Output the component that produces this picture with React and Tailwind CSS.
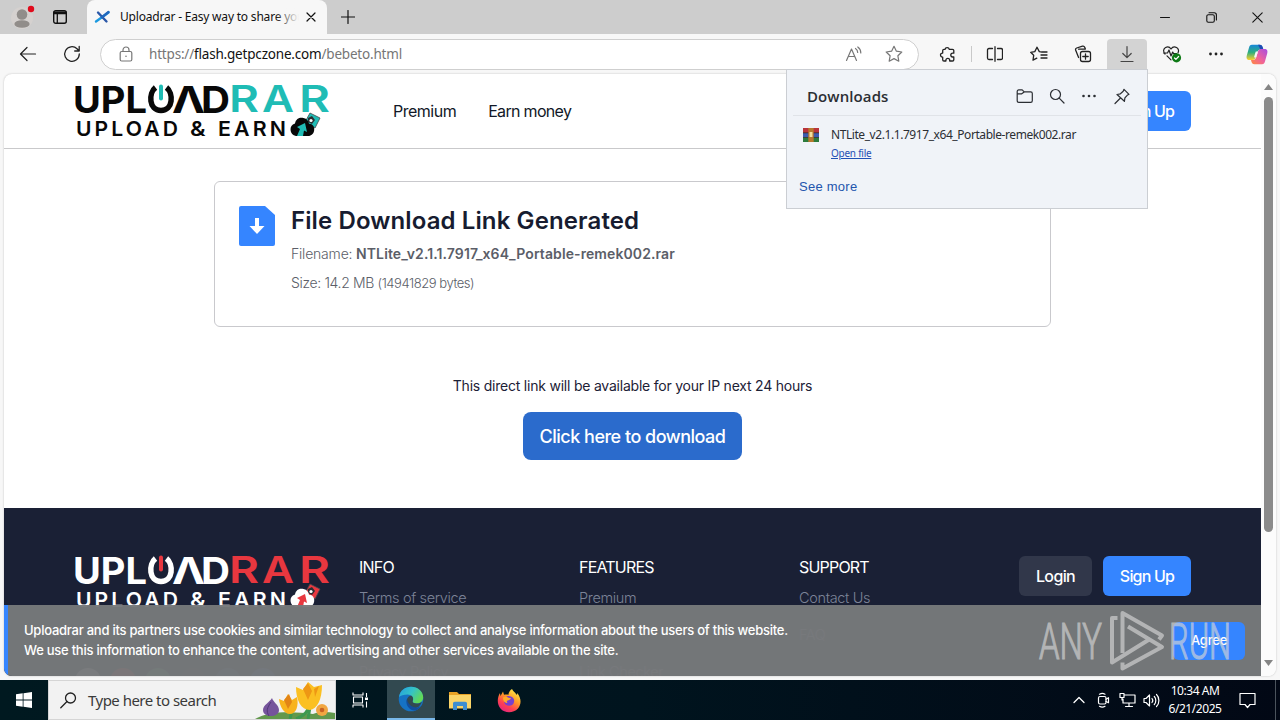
/**
 * Desktop view: browser window with the file download page and the taskbar
 */

import React from 'react';

function Icon({ w = 20, h = w, sw = 1.2, className = '', children }) {
  return (
    <svg
      width={w}
      height={h}
      viewBox={`0 0 ${w} ${h}`}
      fill="none"
      stroke="currentColor"
      strokeWidth={sw}
      strokeLinecap="round"
      strokeLinejoin="round"
      className={`shrink-0 ${className}`}
    >
      {children}
    </svg>
  );
}

function TabStrip() {
  return (
    <div className="flex h-[34px] items-stretch bg-[#cdcdcd] text-[#111]">
      <div className="flex w-[87px] items-center pl-[11px]">
        <Icon w={24} h={26}>
          <circle cx="11" cy="14" r="11" fill="#d5d1cf" stroke="none" />
          <circle cx="11" cy="10.500" r="5.300" fill="#918d8a" stroke="none" />
          <ellipse cx="11" cy="20" rx="7.600" ry="3.800" fill="#918d8a" stroke="none" />
          <circle cx="20" cy="5" r="3.200" fill="#e00b1c" stroke="none" />
        </Icon>
        <Icon w={16} h={16} sw={1.4} className="ml-[17px]">
          <rect x="1.700" y="1.700" width="12.600" height="12.600" rx="2" />
          <path d="M2 3.200h12M2 4.500h12M5.300 5v9" strokeWidth="1.300" />
        </Icon>
      </div>
      <div className="flex w-[240px] items-center rounded-t-lg bg-[#f7f7f7] pl-[7px]">
        <Icon w={17} h={16} sw={2.4}>
          <path d="M2 12.500 14.500 3.500" stroke="#1c9ae0" />
          <path d="M4 3.500 12.500 12.500" stroke="#2b58a8" />
          <path d="M8 8.300 14.500 3" stroke="#2168bd" />
        </Icon>
        <div className="relative ml-[9px] w-[179px] overflow-hidden font-['Noto_Sans','Open_Sans',sans-serif] text-[12px] leading-5 tracking-[-0.2px] whitespace-nowrap">
          Uploadrar - Easy way to share your
          <div className="absolute inset-y-0 right-0 w-6 bg-linear-to-r from-[#f7f7f7]/0 to-[#f7f7f7]" />
        </div>
        <Icon w={10} h={10} className="ml-[7px]">
          <path d="m1 1 8 8M9 1 1 9" />
        </Icon>
      </div>
      <div className="flex w-[42px] items-center justify-center">
        <Icon w={14} h={14}>
          <path d="M7 .5v13M.5 7h13" />
        </Icon>
      </div>
      <div className="ml-auto flex">
        <div className="flex w-[46px] items-center justify-center">
          <Icon w={10} h={10} sw={1}><path d="M.5 5.500h9" /></Icon>
        </div>
        <div className="flex w-[46px] items-center justify-center">
          <Icon w={11} h={11} sw={1.1}>
            <rect x=".8" y="2.800" width="7.500" height="7.500" rx="1.500" />
            <path d="M3 .8h5.200a2.200 2.200 0 0 1 2.200 2.200v5" />
          </Icon>
        </div>
        <div className="flex w-[46px] items-center justify-center">
          <Icon w={11} h={11} sw={1.1}><path d="m.8.8 9.400 9.400M10.200.8.8 10.200" /></Icon>
        </div>
      </div>
    </div>
  );
}

function ToolButton({ active, children }) {
  return (
    <div className="flex w-[44.4px] shrink-0 items-center justify-center">
      <div className={`flex h-[30px] w-10 items-center justify-center ${active ? 'rounded-t-sm bg-[#d3d3d3]' : ''}`}>
        {children}
      </div>
    </div>
  );
}

function CopilotLogo() {
  return (
    <svg width="22" height="21" viewBox="0 0 22 21">
      <defs>
        <linearGradient id="copA" x1="0" y1="0" x2="0" y2="1">
          <stop offset="0" stopColor="#1687d9" />
          <stop offset=".5" stopColor="#2fae7e" />
          <stop offset="1" stopColor="#ffd02b" />
        </linearGradient>
        <linearGradient id="copB" x1="1" y1="0" x2="0" y2="1">
          <stop offset="0" stopColor="#a64de2" />
          <stop offset=".55" stopColor="#f0639a" />
          <stop offset="1" stopColor="#ff8a3c" />
        </linearGradient>
      </defs>
      <path d="M6 .8h7.500c2 0 2.600 1 3.200 3l.5 1.600h-2.700c-1.800 0-2.600 1-3.100 2.700L9.800 13c-.6 2-1.500 3-3.500 3H3.500C.8 16 .1 14 .8 11.500L2.900 4C3.500 1.900 4.200.8 6 .8Z" fill="url(#copA)" />
      <path d="M12 .8h1.700c2 0 2.600 1 3.200 3l.5 1.600h-3z" fill="#1d4bb4" />
      <path d="M16 20.200H8.500c-2 0-2.600-1-3.200-3L5 15.900h2c1.800 0 2.600-1 3.100-2.700L11.800 8c.6-2 1.500-3 3.500-3h3.200c2.700 0 3.400 2 2.700 4.500L19.100 17c-.6 2.100-1.300 3.200-3.100 3.200Z" fill="url(#copB)" />
      <path d="m9.500 8.200-1.300 4.300c-.2.600.1 1 .7 1h1.300l1.800-5.900h-1.200c-.8 0-1.100.1-1.300.6Z" fill="#f7f7f7" />
    </svg>
  );
}

function Toolbar() {
  return (
    <div className="flex h-[40px] items-center bg-[#f7f7f7] text-[#222]">
      <Icon w={18} h={16} className="ml-[19px]">
        <path d="M1.500 8h15M8 1.500 1.500 8 8 14.500" />
      </Icon>
      <Icon w={18} h={18} sw={1.3} className="ml-[26px]">
        <path d="M16.300 9A7.300 7.300 0 1 1 14 3.700L16.200 6M16.200 1.500V6h-4.500" />
      </Icon>
      <div className="ml-[19px] flex h-[31px] w-[819px] items-center rounded-full border border-[#cfcfcf] bg-white text-[#777]">
        <Icon w={14} h={16} className="ml-[18px]">
          <rect x="1.200" y="5.500" width="11.600" height="9.500" rx="1.500" />
          <path d="M4 5.500V4a3 3 0 0 1 6 0v1.500" />
          <circle cx="7" cy="10.200" r=".8" fill="currentColor" stroke="none" />
        </Icon>
        <div className="ml-[16px] font-['Noto_Sans','Open_Sans',sans-serif] text-[13.500px] leading-5 tracking-[-0.19px] whitespace-nowrap text-[#767676]">
          https://<span className="text-[#111]">flash.getpczone.com</span>/bebeto.html
        </div>
        <Icon w={18} h={16} className="ml-auto">
          <path d="M1.500 14.500 6.500 3l5 11.500M3.200 10.500h6.600M10.500 2.500c1.500 1 2.200 2.500 2.200 4M12.800 1c2 1.400 3 3.500 3 6" />
        </Icon>
        <Icon w={18} h={18} className="mr-[15px] ml-[22px]">
          <path d="m9 1.300 2.400 4.900 5.400.8-3.900 3.800.9 5.400L9 13.600l-4.800 2.600.9-5.400L1.200 7l5.400-.8z" />
        </Icon>
      </div>
      <div className="flex w-[52px] justify-center pl-[5px]">
        <Icon w={17} h={17} sw={1.3}>
          <path d="M6 3.300a2.200 2.200 0 0 1 4.300 0h3.200c.8 0 1.300.5 1.300 1.300v2.600h-1.100a1.900 1.900 0 0 0 0 3.800h1.100v2.700c0 .8-.5 1.300-1.300 1.300h-2.800v-.8a1.900 1.900 0 0 0-3.800 0v.8H5c-.8 0-1.300-.5-1.300-1.300v-2.600h-.2a2 2 0 0 1 0-4h.2V4.600c0-.8.500-1.300 1.300-1.300z" />
        </Icon>
      </div>
      <div className="h-4 w-px bg-[#c9c9c9]" />
      <ToolButton>
        <Icon w={17} h={16} sw={1.3}>
          <path d="M6.500 2.500H3C2 2.500 1.500 3 1.500 4v8c0 1 .5 1.500 1.500 1.500h3.500M11.500 2.500H15c1 0 1.500.5 1.500 1.500v8c0 1-.5 1.500-1.500 1.500h-3.500M9 .7v14.600" />
        </Icon>
      </ToolButton>
      <ToolButton>
        <Icon w={18} h={17} sw={1.3}>
          <path d="M10.500 5.800 9.300 5.600 7 1.200 4.800 5.600l-4.100.7 3 3L3 14.200l3.800-2M11.500 6H17M11 9h6M11 12h6" />
        </Icon>
      </ToolButton>
      <ToolButton>
        <Icon w={18} h={18} sw={1.3}>
          <rect x="6.500" y="6.500" width="10" height="10" rx="2" />
          <path d="M11.500 8.800v5.400M8.800 11.500h5.400M4.600 12.500 1.700 5.200c-.4-1 .1-1.900 1-2.200l5.800-1.800c1-.3 1.800.1 2.200 1l.6 1.600M4.600 4.200h6.600" />
        </Icon>
      </ToolButton>
      <ToolButton active>
        <Icon w={14} h={18} className="text-[#444]">
          <path d="M7 1.500v11M2.800 8.500 7 12.700l4.200-4.200M1 16.500h12" />
        </Icon>
      </ToolButton>
      <ToolButton>
        <Icon w={20} h={18}>
          <path d="M3 9C.8 6.500 1.500 3.500 3.600 2.500 6 1.300 8 2.500 9 4c1-1.500 3.200-2.700 5.500-1.500 1.900 1 2.600 3.300 1.500 5.300M1.500 8h4L7 5l2 6 1.700-4 .8 1.500h3M5 10.800l4 4" />
          <circle cx="14.500" cy="12.800" r="4.600" fill="#0e7a16" stroke="none" />
          <path d="m12.500 13 1.400 1.400 2.700-2.900" stroke="#fff" />
        </Icon>
      </ToolButton>
      <ToolButton>
        <Icon w={16} h={4}>
          <g fill="currentColor" stroke="none">
            <circle cx="2.500" cy="2" r="1.400" /><circle cx="8" cy="2" r="1.400" /><circle cx="13.500" cy="2" r="1.400" />
          </g>
        </Icon>
      </ToolButton>
      <div className="ml-[8px]"><CopilotLogo /></div>
    </div>
  );
}

function UploadrarLogo({ main, accent }) {
  return (
    <svg width="256" height="56" viewBox="0 0 256 56" className="shrink-0">
      <g fontFamily="Inter, sans-serif" fontWeight="700" fontSize="36.500" fill={main}>
        <text x="-2" y="29.500" textLength="74" lengthAdjust="spacingAndGlyphs">UPL</text>
        <text x="97" y="29.500" textLength="33" lengthAdjust="spacingAndGlyphs">Λ</text>
        <text x="126" y="29.500" textLength="29" lengthAdjust="spacingAndGlyphs">D</text>
        <g fill={accent} fontWeight="600">
          <text x="154" y="29" textLength="30" lengthAdjust="spacingAndGlyphs">R</text>
          <text x="187" y="29" textLength="32" lengthAdjust="spacingAndGlyphs">A</text>
          <text x="224" y="29" textLength="31" lengthAdjust="spacingAndGlyphs">R</text>
        </g>
      </g>
      <path d="M80.500 4.500C73.500 10 73.500 27.500 86 27.500s12.500-17.500 5.500-23" fill="none" stroke={main} strokeWidth="5.500" />
      <path d="M86 3.500v12" stroke={accent} strokeWidth="4" strokeLinecap="round" />
      <g fontFamily="Inter, sans-serif" fontWeight="600" fontSize="20.500" letterSpacing="3" fill={main}>
        <text x="1" y="53" textLength="105" lengthAdjust="spacingAndGlyphs">UPLOAD</text>
        <text x="115" y="53" textLength="19" lengthAdjust="spacingAndGlyphs">&amp;</text>
        <text x="143" y="53" textLength="71" lengthAdjust="spacingAndGlyphs">EARN</text>
      </g>
      <path d="m235 30 10 5-5 10-10-6z" fill={accent} stroke="#44494c" strokeWidth=".8" />
      <path d="m233 35 4-2 3 4-3 4-4-2z" fill="#2a2f33" />
      <circle cx="236" cy="37.500" r="1.600" fill="#fff" />
      <path d="M221 53a6.500 6.500 0 0 1-1-12.600c1-5 5-6.400 8.500-5.400 3.500.8 5 3 5.500 5.800 4 .2 5.500 3 5.200 6.200-.3 3.500-2.700 6-6.200 6z" fill={main} />
      <path d="m222 44 8-4 2 9-3-1.500L228 53h-6l3-7z" fill={accent} />
    </svg>
  );
}

function PageHeader() {
  return (
    <header className="flex h-[75px] shrink-0 items-center border-b border-[#c9c9cb] pr-[70px] pl-[71px]">
      <UploadrarLogo main="#080808" accent="#1fbcb5" />
      <nav className="ml-[62px] flex gap-[32px] text-[16px] leading-6 tracking-[-0.68px] text-[#111827]">
        <a className="tracking-[-0.5px]">Premium</a>
        <a>Earn money</a>
      </nav>
      <div className="ml-auto flex gap-[11px]">
        <AuthButton kind="light">Login</AuthButton>
        <AuthButton>Sign Up</AuthButton>
      </div>
    </header>
  );
}

function AuthButton({ kind = 'primary', children }) {
  const look = {
    primary: 'w-[88px] bg-[#3585ff] text-white tracking-[-0.8px]',
    dark: 'w-[73px] bg-[#31374a] text-white tracking-[-0.65px]',
    light: 'w-[73px] bg-[#eef0f4] text-[#111827] tracking-[-0.65px]'
  };
  return (
    <button className={`h-10 rounded-md text-[16px] font-medium ${look[kind]}`}>
      {children}
    </button>
  );
}

function FileCard() {
  return (
    <section className="mt-[32px] flex h-[146px] w-[837px] rounded-md border border-[#c9c9cd] pt-[24px] pl-[24px]">
      <Icon w={36} h={40}>
        <path d="M2 0h24l10 9v29a2 2 0 0 1-2 2H2a2 2 0 0 1-2-2V2a2 2 0 0 1 2-2Z" fill="#3585ff" stroke="none" />
        <path d="M16 12h4v8h5.500L18 28l-7.500-8H16z" fill="#fff" stroke="none" />
      </Icon>
      <div className="ml-[16px] text-[14px] leading-5 whitespace-nowrap text-[#5b5e68]">
        <h1 className="-mt-px text-[24px] leading-8 font-semibold tracking-[0.11px] text-[#171c30]">File Download Link Generated</h1>
        <p className="mt-[7px] font-light tracking-[-0.2px]">
          Filename: <b className="font-semibold tracking-[0.1px]">NTLite_v2.1.1.7917_x64_Portable-remek002.rar</b>
        </p>
        <p className="mt-[9px] font-light tracking-[-0.35px]">
          Size: 14.2 MB <span className="text-[13px] tracking-[-0.44px]">(14941829 bytes)</span>
        </p>
      </div>
    </section>
  );
}

const columns = [
  { title: 'INFO', links: ['Terms of service', '', 'Privacy Policy'] },
  { title: 'FEATURES', links: ['Premium', '', 'Link Checker'] },
  { title: 'SUPPORT', links: ['Contact Us', 'FAQ', ''] }
];

function Footer() {
  return (
    <footer className="mt-[48px] flex h-[170px] shrink-0 items-start bg-[#1a2035] pt-[48px] pr-[70px] pl-[71px]">
      <div className="w-[284px]">
        <div className="-mt-[2px]"><UploadrarLogo main="#ffffff" accent="#e8373f" /></div>
        <div className="mt-[58px] flex gap-[9px]">
          <span className="size-[26px] rounded-full bg-[#d8d8d8]" />
          <span className="size-[26px] rounded-full bg-[#e93434]" />
          <span className="size-[26px] rounded-full bg-[#39b36a]" />
          <span className="size-[26px] rounded-full bg-[#222]" />
          <span className="size-[26px] rounded-full bg-[#28648b]" />
          <span className="size-[26px] rounded-full bg-[#265bb6]" />
        </div>
      </div>
      {columns.map((col) => (
        <div key={col.title} className="w-[220px] shrink-0">
          <h2 className="-mt-px text-[16px] leading-6 tracking-[-0.8px] text-white">{col.title}</h2>
          <ul className="mt-[9px] flex flex-col gap-[17px] text-[14.500px] leading-5 font-light tracking-[-0.35px] text-[#7c8397]">
            {col.links.map((link, i) => <li key={i} className="h-5">{link}</li>)}
          </ul>
        </div>
      ))}
      <div className="ml-auto flex gap-[11px]">
        <AuthButton kind="dark">Login</AuthButton>
        <AuthButton>Sign Up</AuthButton>
      </div>
    </footer>
  );
}

function CookieBanner() {
  return (
    <div className="absolute bottom-0 left-0 flex h-[71px] w-[1257px] items-center border-l-4 border-[#3585ff] bg-[#77797b]/97 pr-[16px] pl-[16px]">
      <p className="-mt-px text-[13px] leading-5 font-medium tracking-[-0.25px] whitespace-nowrap text-white">
        Uploadrar and its partners use cookies and similar technology to collect and analyse information about the users of this website.
        <br />
        We use this information to enhance the content, advertising and other services available on the site.
      </p>
      <button className="ml-auto h-[38px] w-[72px] rounded-md bg-[#3585ff] text-[13px] font-medium tracking-[-0.2px] text-white">
        Agree
      </button>
    </div>
  );
}

function Scrollbar() {
  return (
    <div className="flex w-[15px] flex-col items-center bg-[#fcfcfc] text-[#858585]">
      <Icon w={9} h={6} className="mt-[10px]"><path d="M0 6 4.500 0 9 6z" fill="currentColor" stroke="none" /></Icon>
      <div className="mt-[7px] h-[435px] w-[9px] rounded-full bg-[#8b8b8b]" />
      <Icon w={9} h={6} className="mt-auto mb-[10px]"><path d="m0 0 4.500 6L9 0z" fill="currentColor" stroke="none" /></Icon>
    </div>
  );
}

function DownloadsPopup() {
  return (
    <div className="absolute top-[69px] left-[786px] h-[140px] w-[362px] border border-[#cbced3] bg-[#f0f3f8] font-['Noto_Sans','Open_Sans',sans-serif] text-[#2b2e33]">
      <div className="mx-[6px] flex h-[46px] items-center border-b border-[#e0e3e8] pt-[7px] pr-[11px] pl-[14px]">
        <h2 className="font-['Open_Sans',sans-serif] text-[15px] leading-5 font-semibold tracking-[0.1px]">Downloads</h2>
        <Icon w={18} h={16} className="ml-auto">
          <path d="M1.200 3.500c0-1 .6-1.600 1.600-1.600h3.400l2 2h6.500c1 0 1.600.6 1.600 1.600v7.300c0 1-.6 1.600-1.600 1.600H2.800c-1 0-1.600-.6-1.600-1.600zM1.200 5.800h4.500l2.500-1.900" />
        </Icon>
        <Icon w={16} h={16} className="ml-[15px]">
          <circle cx="6.500" cy="6.500" r="5" /><path d="m10.200 10.200 4.800 4.800" />
        </Icon>
        <Icon w={16} h={4} className="ml-[16px]">
          <g fill="currentColor" stroke="none">
            <circle cx="2.500" cy="2" r="1.300" /><circle cx="8" cy="2" r="1.300" /><circle cx="13.500" cy="2" r="1.300" />
          </g>
        </Icon>
        <Icon w={16} h={17} className="ml-[17px]">
          <path d="m10 1.300 5 5-1.800 1-2.300 2.500-.5 3.500L3 6.500l3.400-.7 2.800-2.500zM6.500 10 1 15.500" />
        </Icon>
      </div>
      <div className="mt-[10px] flex pl-[16px]">
        <Icon w={16} h={16} className="mt-px">
          <g stroke="none">
            <path d="M0 1h16v5H0z" fill="#b9343b" />
            <path d="M0 6h16v4.500H0z" fill="#3d5bae" />
            <path d="M0 10.500h16V15H0z" fill="#2c7b3c" />
            <path d="M0 5.500h16v.8H0zM0 10.200h16v.8H0z" fill="#2a2a20" />
            <path d="M5.300 1h5.400v14H5.300z" fill="#b8792e" />
            <path d="M6.500 5h3v5h-3z" fill="#f2df9c" />
          </g>
        </Icon>
        <div className="ml-[12px] whitespace-nowrap">
          <p className="text-[12px] leading-[18px] tracking-[-0.43px]">NTLite_v2.1.1.7917_x64_Portable-remek002.rar</p>
          <a className="block text-[10px] leading-[19px] tracking-[-0.25px] text-[#1f50b5] underline">Open file</a>
        </div>
      </div>
      <a className="mt-[14px] ml-[12px] block font-['Liberation_Sans',sans-serif] text-[13px] leading-5 tracking-[0.25px] text-[#2355ad]">See more</a>
    </div>
  );
}

function Watermark() {
  return (
    <svg width="196" height="66" viewBox="0 0 196 66" className="absolute top-[607px] left-[1037px] opacity-65">
      <g fontFamily="Roboto, sans-serif" fontWeight="300" fontSize="50" fill="#d6d6d6" stroke="#d6d6d6" strokeWidth="1.200">
        <text x="2" y="51.500" textLength="63" lengthAdjust="spacingAndGlyphs">ANY</text>
        <text x="132" y="51.500" textLength="62" lengthAdjust="spacingAndGlyphs">RUN</text>
      </g>
      <g fill="none" stroke="#d6d6d6" strokeWidth="4" strokeLinejoin="round">
        <path d="M80.500 11H75v44.500l38-23.500" />
        <path d="M85.500 46V6L125 28.500l-3 4M91 19.500 125 40 85.500 61.500v-6" />
      </g>
    </svg>
  );
}

function SearchFlowers() {
  return (
    <svg width="80" height="38" viewBox="0 0 80 38" className="ml-auto">
      <path d="M0 38c12-8 38-8 58-5 8-3 15-2 22-1v6z" fill="#62984c" />
      <path d="M35 38c3-9 2-14 1-18M53 38c2-9 2-13 2-18M41 38c8-3 13-8 14-16" stroke="#3d9850" strokeWidth="3" fill="none" />
      <path d="M17 17c1 4 7 7 7 12 0 4-4 6-8 6s-8-2-8-6c0-5 7-8 9-12Z" fill="#76549c" />
      <path d="M16 21c-4 6-5 9-2 14" stroke="#523878" fill="none" />
      <path d="m24 18 5 2 4-7 4 6 5-3c2 9-1 17-7 17s-10-7-11-15Z" fill="#f8b31d" />
      <path d="m29 19 5-6 3 8-4 7z" fill="#e28416" />
      <path d="m41 6 7 3 5-8 6 5 8-2c0 15-5 24-12 25-9 0-14-10-14-23Z" fill="#fbc022" />
      <path d="m48 8 5-6 4 8-4 9zM59 8l5-3-4 11z" fill="#ee9714" />
      <circle cx="67" cy="29" r="6" fill="#f1a642" />
      <circle cx="67" cy="29" r="2.300" fill="#c86122" />
    </svg>
  );
}

function EdgeLogo() {
  return (
    <svg width="26" height="26" viewBox="0 0 26 26">
      <defs>
        <linearGradient id="edgeTop" x1="0" x2="1" y1="0" y2=".5">
          <stop offset="0" stopColor="#249de0" />
          <stop offset=".55" stopColor="#35c3c6" />
          <stop offset="1" stopColor="#62d957" />
        </linearGradient>
      </defs>
      <circle cx="13" cy="13" r="12.300" fill="#1672c4" />
      <path d="M1 11C2.200 4.500 7 .8 13 .8c7 0 12.200 5 12.200 10.500 0 4-3 6.200-6.300 6.200-3.500 0-4.800-1-4.200-2.400 1.500-3.600-1.200-6.600-5-6.600C5.500 8.500 2.500 9.500 1 11Z" fill="url(#edgeTop)" />
      <path d="M9 13c1-2.500 3-3.600 4.500-3.300 1.500 1.300 2.200 3 1.200 5.300-.6 1.400 1 2.500 4.200 2.500 2.300 0 3.800-.7 5-1.500-2 5-5.400 6.500-8.400 6-4.800-.8-7.500-5-6.500-9Z" fill="#324950" />
      <path d="M9 13c-2 4.500 1 10.500 7 11.500 2.500.3 5-1.500 7-5-2 2-5 2.500-7.500 1.600C11.500 19.500 9.300 16.500 9 13Z" fill="#124d9c" />
    </svg>
  );
}

function FirefoxLogo() {
  return (
    <svg width="24" height="25" viewBox="0 0 24 25">
      <defs>
        <linearGradient id="fox" x1=".8" y1="0" x2=".2" y2="1">
          <stop offset="0" stopColor="#fff04a" />
          <stop offset=".4" stopColor="#ff9a27" />
          <stop offset=".7" stopColor="#ff4050" />
          <stop offset="1" stopColor="#e02285" />
        </linearGradient>
      </defs>
      <path d="M15 1c1 2.500 3 3 4 5l1 1 .3-2C25 11 24 17 21 20.500 16 25.800 7.500 25.300 3.500 20.500-.3 16 .2 9.500 3 5l.5 3L6 3.500l1 3.300c2-.5 3-.4 4.500 0C11.500 4.500 13 2 15 1Z" fill="url(#fox)" />
      <path d="M8 10c2-2.500 4-2.500 6-1.500 3 1 4 4 2.500 7-1.500 2.500-5.500 3-8 1C6.800 15 7 12.500 8 10Z" fill="#7740ce" />
      <path d="M6 9.500c2.500-1.200 4-.5 5.500.3l2.500.4c-1 2-3 1.700-4 2.700-.6 1 0 1.700.8 2-2.800 0-5-2-4.800-5.400Z" fill="#ffab28" />
    </svg>
  );
}

function Taskbar() {
  return (
    <div className="flex h-10 items-stretch bg-linear-to-r from-[#001920] via-[#00141e] to-[#020815] font-['Noto_Sans','Open_Sans',sans-serif] text-white">
      <div className="flex w-12 items-center justify-center">
        <svg width="16" height="16" viewBox="0 0 16 16" fill="#fff">
          <path d="m0 2.300 6.700-1v6.300H0zM7.500 1.200 16 0v7.600H7.500zM0 8.400h6.700v6.300L0 13.700zM7.500 8.400H16V16l-8.500-1.200z" />
        </svg>
      </div>
      <div className="flex w-[288px] items-center border border-[#d5d5d5] bg-[#f2f2f2] pl-[11px] text-[#222]">
        <Icon w={17} h={17} sw={1.3}>
          <circle cx="10.500" cy="6" r="5" /><path d="M7 9.500.8 15.700" />
        </Icon>
        <span className="ml-[11px] text-[15px] leading-5 tracking-[-0.52px] whitespace-nowrap text-[#3a3a3a]">Type here to search</span>
        <SearchFlowers />
      </div>
      <div className="flex w-[51px] items-center justify-center pr-[3px]">
        <Icon w={17} h={16} sw={1.1}>
          <path d="M1 .5V3h10V.5M1 15.500V13h10v2.500M1.500 5h9v6h-9zM14.500 1v4M14.500 9.500v6" strokeLinecap="butt" />
          <path d="M13 5.500h3v2.500h-3z" fill="#fff" stroke="none" />
        </Icon>
      </div>
      <div className="flex w-12 items-center justify-center border-b-2 border-[#79b8ea] bg-[#324950]">
        <EdgeLogo />
      </div>
      <div className="flex w-[49px] items-center justify-center">
        <svg width="22" height="19" viewBox="0 0 22 19">
          <path d="M0 1h8l2 2h12v14H0z" fill="#e9a325" />
          <path d="M0 4h22v13.500H0z" fill="#fbd568" />
          <path d="M4 19v-6.500c0-1 .7-1.800 1.800-1.800h10.400c1.100 0 1.800.8 1.800 1.800V19h-4v-4H8v4z" fill="#3e8ed0" />
        </svg>
      </div>
      <div className="flex w-[49px] items-center justify-center">
        <FirefoxLogo />
      </div>
      <div className="ml-auto flex items-center">
        <Icon w={12} h={8} sw={1.3}><path d="m1 6.500 5-5 5 5" /></Icon>
        <Icon w={13} h={16} className="ml-[12px]">
          <rect x="1.500" y="4.500" width="7.500" height="7.500" rx="1.500" />
          <path d="m9 7.200 2.500-1.500v5L9 9.500M2.500 2.200c1.800-1 3.800-1 5.500 0M2.500 14.300c1.800 1 3.800 1 5.500 0" />
        </Icon>
        <Icon w={17} h={16} className="ml-[9px]">
          <path d="M5.500 3H16v8H4V7M10 11v3.500M6.500 14.500h7M1 1.500h4v4H1zM3 5.500V8" />
        </Icon>
        <Icon w={17} h={15} className="ml-[7px]">
          <path d="M1 5.500h2L6.500 2v11L3 9.500H1zM9 5.500c.8 1 .8 3 0 4M11.300 3.500c2 2 2 6 0 8M13.500 1.500c3.200 3 3.200 9 0 12" />
        </Icon>
        <div className="ml-[8px] w-[54px] text-center text-[12px] leading-[18px] tracking-[-0.45px] whitespace-nowrap">
          <div>10:34 AM</div>
          <div>6/21/2025</div>
        </div>
        <Icon w={17} h={17} className="ml-[17px]">
          <path d="M1 1.500h15v11h-5L8.500 15.500 6 12.500H1z" />
        </Icon>
        <div className="ml-[19px] h-10 w-px bg-[#4b535c]" />
        <div className="w-[4px]" />
      </div>
    </div>
  );
}

export default function App() {
  return (
    <div className="relative flex h-[720px] w-[1280px] flex-col overflow-hidden bg-[#f7f7f7] font-['Inter',sans-serif]">
      <TabStrip />
      <Toolbar />
      <div className="relative mx-[4px] flex h-[602px] overflow-hidden rounded-lg bg-white shadow-[0_0_2px_#bbb]">
        <main className="flex h-full w-[1257px] flex-col overflow-hidden">
          <PageHeader />
          <div className="flex shrink-0 flex-col items-center">
            <FileCard />
            <p className="mt-[49px] text-[14px] leading-5 tracking-[-0.22px] text-[#1c2136]">
              This direct link will be available for your IP next 24 hours
            </p>
            <button className="mt-[16px] h-12 w-[219px] rounded-lg bg-[#2b6bcc] text-[18px] font-medium tracking-[-0.5px] text-white">
              Click here to download
            </button>
          </div>
          <Footer />
        </main>
        <Scrollbar />
        <CookieBanner />
      </div>
      <div className="h-[4px] shrink-0" />
      <Taskbar />
      <DownloadsPopup />
      <Watermark />
    </div>
  );
}
